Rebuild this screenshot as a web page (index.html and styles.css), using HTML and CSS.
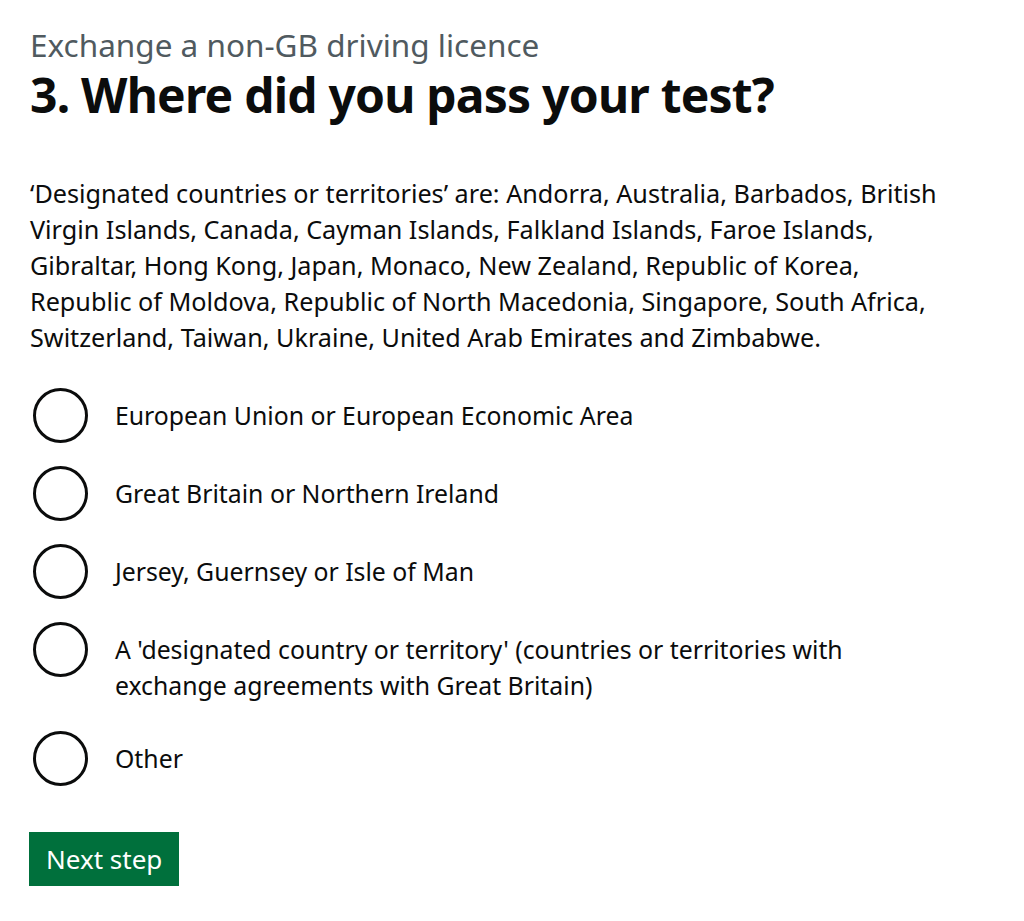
FILE: index.html
```html
<!DOCTYPE html>
<html lang="en">
<head>
<meta charset="utf-8">
<title>Where did you pass your test?</title>
<link rel="stylesheet" href="styles.css">
</head>
<body>
<main class="page">
  <span class="caption">Exchange a non-GB driving licence</span>
  <h1 class="heading">3. Where did you pass your test?</h1>
  <p class="body">‘Designated countries or territories’ are: Andorra, Australia, Barbados, British Virgin Islands, Canada, Cayman Islands, Falkland Islands, Faroe Islands, Gibraltar, Hong Kong, Japan, Monaco, New Zealand, Republic of Korea, Republic of Moldova, Republic of North Macedonia, Singapore, South Africa, Switzerland, Taiwan, Ukraine, United Arab Emirates and Zimbabwe.</p>
  <div class="radios">
    <label class="radio"><input class="radio-input" type="radio" name="where"><span class="radio-label">European Union or European Economic Area</span></label>
    <label class="radio"><input class="radio-input" type="radio" name="where"><span class="radio-label">Great Britain or Northern Ireland</span></label>
    <label class="radio"><input class="radio-input" type="radio" name="where"><span class="radio-label">Jersey, Guernsey or Isle of Man</span></label>
    <label class="radio"><input class="radio-input" type="radio" name="where"><span class="radio-label">A 'designated country or territory' (countries or territories with exchange agreements with Great Britain)</span></label>
    <label class="radio"><input class="radio-input" type="radio" name="where"><span class="radio-label">Other</span></label>
  </div>
  <button class="button" type="button">Next step</button>
</main>
</body>
</html>
```
FILE: styles.css
```css
html, body {
  margin: 0;
  padding: 0;
  background: #ffffff;
}
body {
  font-family: "Noto Sans", "Liberation Sans", Arial, sans-serif;
  color: #0b0c0c;
}
.page {
  padding: 25px 30px 0 30px;
  display: flex;
  flex-direction: column;
  align-items: flex-start;
  max-width: 920px;
}
.caption {
  display: block;
  font-size: 31.5px;
  line-height: 40px;
  color: #505a5f;
}
.heading {
  margin: 0;
  font-size: 48px;
  line-height: 60px;
  font-weight: 700;
  letter-spacing: -0.8px;
}
.body {
  margin: 50px 0 0 0;
  font-size: 25.2px;
  line-height: 36px;
}
.radios {
  margin-top: 33px;
  display: flex;
  flex-direction: column;
  gap: 23px;
}
.radio {
  display: flex;
  align-items: flex-start;
  gap: 27px;
  min-height: 55px;
  padding-left: 3px;
}
.radio-input {
  appearance: none;
  -webkit-appearance: none;
  margin: 0;
  flex: 0 0 55px;
  width: 55px;
  height: 55px;
  border: 3px solid #0b0c0c;
  border-radius: 50%;
  box-sizing: border-box;
  background: #fff;
}
.radio-label {
  padding: 9px 0 5px 0;
  font-size: 24.8px;
  line-height: 36px;
  max-width: 760px;
}
.button {
  margin-top: 46px;
  margin-left: -1px;
  font-family: inherit;
  font-size: 26px;
  line-height: 32px;
  color: #ffffff;
  background: #00703c;
  border: 0;
  border-radius: 0;
  padding: 11px 17px 11px 17px;
  box-shadow: 0 3px 0 #002d18;
  cursor: pointer;
}
```
